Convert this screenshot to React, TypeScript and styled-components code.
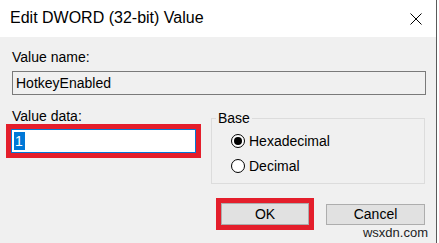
import React from "react";
import styled, { createGlobalStyle } from "styled-components";

const Global = createGlobalStyle`
  html, body { margin: 0; padding: 0; background: #ffffff; }
  body { font-family: "Liberation Sans", Arial, sans-serif; color: #000; }
  * { box-sizing: border-box; }
`;

const Screen = styled.div`
  width: 439px;
  height: 243px;
  overflow: hidden;
  position: relative;
  background: #ffffff;
`;

const Window = styled.div`
  width: 437px;
  height: 243px;
  border-right: 1px solid #5a5a5a;
  display: flex;
  flex-direction: column;
`;

const TitleBar = styled.div`
  height: 37px;
  flex: none;
  background: #ffffff;
  display: flex;
  align-items: center;
  justify-content: space-between;
  padding: 0 14px 0 10px;
`;

const Title = styled.div`
  font-size: 16px;
  color: #000;
  margin-top: -1px;
`;

const Body = styled.div`
  flex: 1;
  background: #f0f0f0;
  padding: 12px 11px 0 12px;
  display: flex;
  flex-direction: column;
`;

const Label = styled.div`
  font-size: 14px;
  line-height: 17px;
  color: #000;
`;

const ReadOnlyBox = styled.div`
  margin-top: 5px;
  height: 24px;
  width: 414px;
  border: 1px solid #7a7a7a;
  background: #f0f0f0;
  font-size: 14px;
  line-height: 22px;
  padding-left: 3px;
`;

const Row = styled.div`
  display: flex;
  align-items: flex-start;
  margin-top: 13px;
  margin-left: -6px;
`;

const LeftCol = styled.div`
  width: 205px;
  display: flex;
  flex-direction: column;
`;

const DataLabel = styled(Label)`
  margin-left: 6px;
`;

const RedFrame = styled.div`
  margin-top: -1px;
  width: 195px;
  height: 34px;
  border: 5px solid #e41e2b;
`;

const DataInput = styled.div`
  height: 24px;
  border: 1px solid #0078d7;
  background: #ffffff;
  padding: 2px 0 0 2px;
`;

const Selected = styled.span`
  display: inline-block;
  background: #0078d7;
  color: #ffffff;
  font-size: 14px;
  line-height: 18px;
  padding: 0 2px 0 1px;
`;

const Group = styled.fieldset`
  margin: 3px 0 0 0;
  width: 214px;
  height: 73px;
  border: 1px solid #dcdcdc;
  border-radius: 0;
  padding: 6px 0 0 19px;
  display: flex;
  flex-direction: column;
  gap: 6px;
`;

const Legend = styled.legend`
  font-size: 14px;
  padding: 0 2px;
  margin-left: -15px;
  line-height: 14px;
`;

const RadioRow = styled.div`
  display: flex;
  align-items: center;
  height: 19px;
  font-size: 14px;
`;

const RadioCircle = styled.span<{ $checked?: boolean }>`
  width: 14px;
  height: 14px;
  border: 1px solid #000;
  border-radius: 50%;
  background: #ffffff;
  display: flex;
  align-items: center;
  justify-content: center;
  margin-right: 4px;
  &::after {
    content: "";
    display: ${(p) => (p.$checked ? "block" : "none")};
    width: 8px;
    height: 8px;
    border-radius: 50%;
    background: #000;
  }
`;

const Buttons = styled.div`
  display: flex;
  align-items: center;
  margin-top: 14px;
  margin-left: 204px;
  gap: 12px;
`;

const OkFrame = styled.div`
  width: 99px;
  height: 32px;
  border: 5px solid #e41e2b;
`;

const Button = styled.div<{ $w?: number }>`
  width: ${(p) => (p.$w ? `${p.$w}px` : "100%")};
  height: ${(p) => (p.$w ? "21px" : "100%")};
  background: #e1e1e1;
  border: 1px solid #adadad;
  display: flex;
  align-items: center;
  justify-content: center;
  font-size: 14px;
`;

const Watermark = styled.div`
  position: absolute;
  right: 10px;
  bottom: 3px;
  font-size: 13px;
  color: #222;
  background: rgba(240, 240, 240, 0.9);
  padding: 0 1px;
`;

function CloseIcon() {
  return (
    <svg width="12" height="12" viewBox="0 0 12 12">
      <path d="M0.5 0.5 L11.5 11.5 M11.5 0.5 L0.5 11.5" stroke="#000" strokeWidth="1" fill="none" />
    </svg>
  );
}

export default function App() {
  return (
    <Screen>
      <Global />
      <Window>
        <TitleBar>
          <Title>Edit DWORD (32-bit) Value</Title>
          <CloseIcon />
        </TitleBar>
        <Body>
          <Label>Value name:</Label>
          <ReadOnlyBox>HotkeyEnabled</ReadOnlyBox>
          <Row>
            <LeftCol>
              <DataLabel>Value data:</DataLabel>
              <RedFrame>
                <DataInput>
                  <Selected>1</Selected>
                </DataInput>
              </RedFrame>
            </LeftCol>
            <Group>
              <Legend>Base</Legend>
              <RadioRow>
                <RadioCircle $checked />
                Hexadecimal
              </RadioRow>
              <RadioRow>
                <RadioCircle />
                Decimal
              </RadioRow>
            </Group>
          </Row>
          <Buttons>
            <OkFrame>
              <Button>OK</Button>
            </OkFrame>
            <Button $w={100}>Cancel</Button>
          </Buttons>
        </Body>
      </Window>
      <Watermark>wsxdn.com</Watermark>
    </Screen>
  );
}
